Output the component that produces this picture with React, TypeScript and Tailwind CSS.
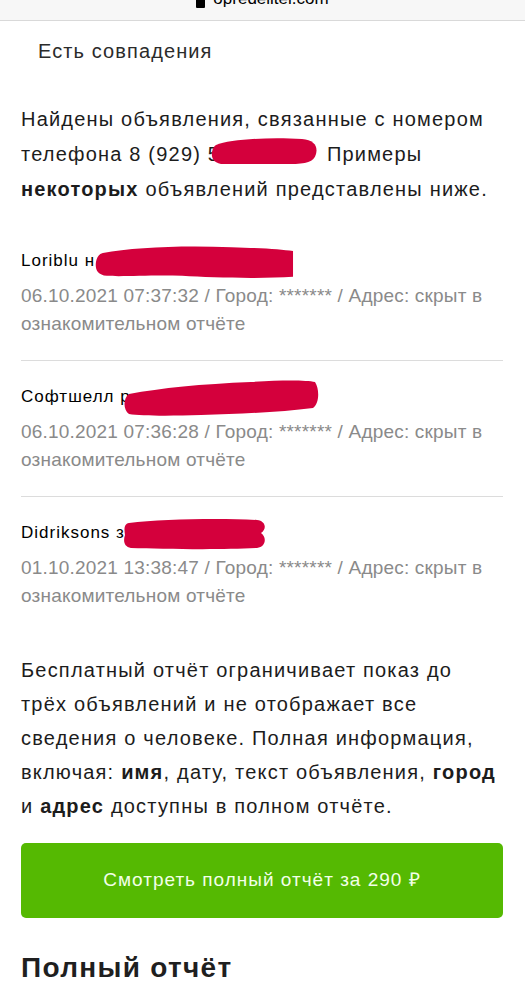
const listings = [
  { title: "Loriblu н", date: "06.10.2021 07:37:32", mark: "a" },
  { title: "Софтшелл р", date: "06.10.2021 07:36:28", mark: "b" },
  { title: "Didriksons з", date: "01.10.2021 13:38:47", mark: "c" },
];

// red marker strokes that hide personal data on the screenshot
function Mark({ kind }: { kind: string }) {
  if (kind === "phone") {
    return (
      <svg width="110" height="30" viewBox="0 0 110 30" className="inline-block align-middle -ml-[10px] -my-2 -translate-y-[5px]">
        <path d="M6 9 C20 3 60 1 92 3 C104 4 108 10 106 18 C104 26 96 28 80 28 L14 28 C4 28 1 22 2 16 C3 12 4 10 6 9 Z" fill="#d4003c" />
      </svg>
    );
  }
  if (kind === "a") {
    return (
      <svg width="202" height="38" viewBox="0 0 204 38" className="inline-block align-middle -ml-[2px] -my-3">
        <path d="M10 10 C40 4 90 2 140 4 C170 5 190 6 202 8 L202 34 C170 36 120 35 90 33 C60 32 30 34 14 33 C4 32 2 26 3 19 C4 14 6 11 10 10 Z" fill="#d4003c" />
      </svg>
    );
  }
  if (kind === "b") {
    return (
      <svg width="200" height="40" viewBox="0 0 200 40" className="inline-block align-middle -ml-[10px] -my-3">
        <path d="M8 16 C40 10 80 6 130 4 C160 2 185 2 194 4 C199 12 198 26 192 30 C160 34 120 36 80 37 C50 38 20 38 8 36 C2 32 2 20 8 16 Z" fill="#d4003c" />
      </svg>
    );
  }
  return (
    <svg width="146" height="34" viewBox="0 0 146 34" className="inline-block align-middle -ml-[4px] -my-3">
      <path d="M8 6 C40 2 100 1 136 3 C145 4 146 12 140 16 C146 20 145 30 136 31 C100 33 40 32 10 31 C3 30 2 24 4 18 C3 12 3 7 8 6 Z" fill="#d4003c" />
    </svg>
  );
}

export default function App() {
  return (
    <div className="min-h-[1000px] bg-white font-['Liberation_Sans',Arial,sans-serif] text-[#1c1c1c]">
      <div className="h-[21px] overflow-hidden bg-[#f7f7f7] border-b border-[#d9d9d9]">
        <div className="-mt-[11px] flex items-center justify-center gap-2 text-[17px] leading-[20px] text-black">
          <span className="mt-[8px] inline-block h-[10px] w-[9px] rounded-[1px] bg-black" />
          <span>opredelitel.com</span>
        </div>
      </div>

      <div className="pl-[21px] pr-[22px]">
        <p className="mt-[16px] pl-[17px] text-[20px] leading-[28px] tracking-[1.1px] text-[#2b2b2b]">Есть совпадения</p>

        <p className="mt-[37px] text-[20px] leading-[35px] tracking-[1.2px]">
          Найдены объявления, связанные с номером телефона 8 (929) 5
          <Mark kind="phone" /> Примеры <b>некоторых</b> объявлений представлены ниже.
        </p>

        <div className="mt-[40px]">
          {listings.map((item, i) => (
            <div key={item.date} className={i < listings.length - 1 ? "pb-[22px] mb-[22px] border-b border-[#dcdcdc]" : ""}>
              <div className="text-[17px] leading-[28px] tracking-[1px] text-black whitespace-nowrap">
                {item.title}
                <Mark kind={item.mark} />
              </div>
              <p className="mt-[7px] text-[19px] leading-[28px] tracking-[0.2px] text-[#8a8a8a]">
                {item.date} / Город: ******* / Адрес: скрыт в ознакомительном отчёте
              </p>
            </div>
          ))}
        </div>

        <p className="mt-[43px] text-[20px] leading-[34px] tracking-[1.2px]">
          Бесплатный отчёт ограничивает показ до трёх объявлений и не отображает все сведения о человеке. Полная информация, включая: <b>имя</b>, дату, текст объявления, <b>город</b> и <b>адрес</b> доступны в полном отчёте.
        </p>

        <button className="mt-[20px] flex h-[75px] w-full items-center justify-center rounded-[5px] bg-[#55b902] text-[19px] tracking-[1px] text-[#f2ffe8]">
          Смотреть полный отчёт за 290 ₽
        </button>

        <h2 className="mt-[32px] text-[28px] leading-[36px] tracking-[1.3px] font-bold text-[#1f1f1f]">Полный отчёт</h2>
      </div>
    </div>
  );
}
